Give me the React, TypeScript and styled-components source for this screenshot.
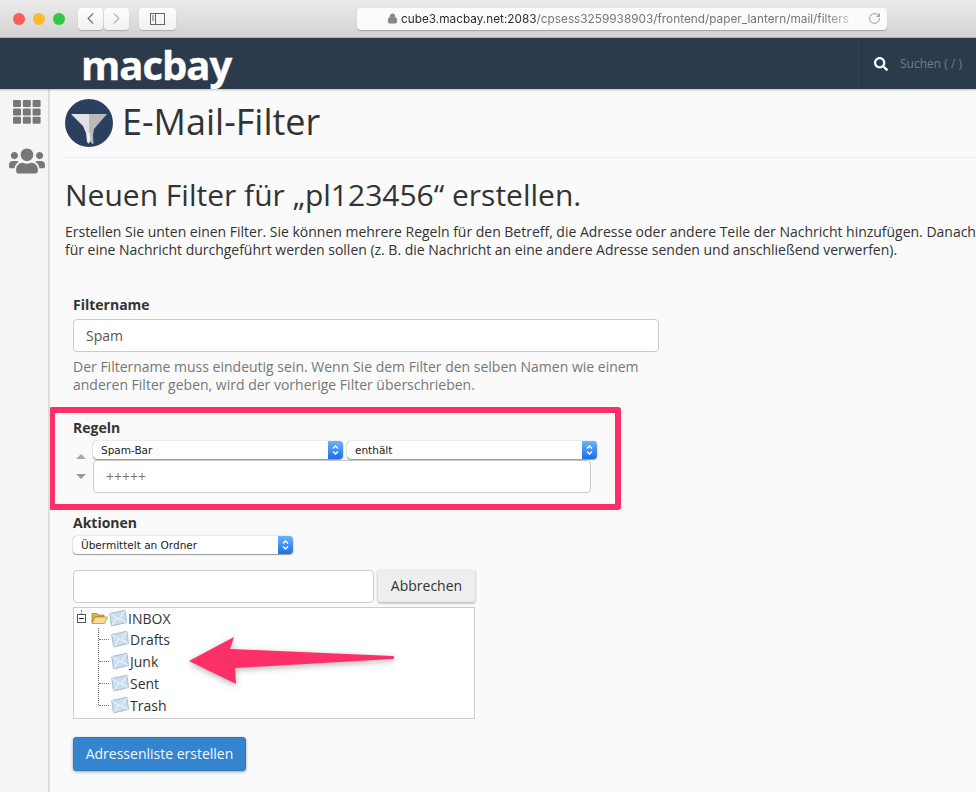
import React from "react";
import styled, { createGlobalStyle } from "styled-components";
import { ChevronLeft, ChevronRight, RotateCw, Lock } from "lucide-react";
import { FaSearch, FaUsers } from "react-icons/fa";

const Global = createGlobalStyle`
  html, body { margin: 0; padding: 0; background: #fafafa; overflow: hidden; }
  body { width: 976px; height: 792px; font-family: "Open Sans", sans-serif; color: #333; }
  * { box-sizing: border-box; }
`;

const Page = styled.div`
  width: 976px; height: 792px; overflow: hidden; position: relative;
  display: flex; flex-direction: column; background: #fafafa;
`;
const Toolbar = styled.div`
  height: 38px; flex: none; display: flex; align-items: center; padding: 0 0 0 13px;
  background: linear-gradient(#ebebeb, #d3d3d3); border-bottom: 1px solid #b5b5b5;
`;
const Lights = styled.div`display: flex; gap: 8px; margin-right: 13px;`;
const Light = styled.span<{ $c: string }>`
  width: 12px; height: 12px; border-radius: 50%; background: ${p => p.$c};
`;
const ToolButton = styled.div<{ $w: number; $mr: number }>`
  width: ${p => p.$w}px; height: 22px; margin-right: ${p => p.$mr}px; flex: none;
  display: flex; align-items: center; justify-content: center; color: #6f6f6f;
  background: linear-gradient(#fdfdfd, #f1f1f1); border-radius: 4px;
  box-shadow: 0 1px 1px rgba(0,0,0,.22);
`;
const UrlBar = styled.div`
  width: 530px; height: 22px; margin-left: 181px; flex: none; position: relative;
  display: flex; align-items: center; padding-left: 30px; color: #777;
  background: #fbfbfb; border-radius: 4px; box-shadow: 0 1px 1px rgba(0,0,0,.25);
  font: 11.8px "Inter", sans-serif; white-space: nowrap; overflow: hidden;
`;
const UrlText = styled.span`
  margin-left: 3px; width: 454px; overflow: hidden; flex: none;
  -webkit-mask-image: linear-gradient(90deg, #000 93%, rgba(0,0,0,.25));
  mask-image: linear-gradient(90deg, #000 93%, rgba(0,0,0,.25));
`;
const Host = styled.span`color: #2c2c2c;`;
const Reload = styled.span`margin-left: 13px; display: flex; color: #707070;`;

const Header = styled.header`
  height: 51px; flex: none; display: flex; align-items: center; background: #2b3b4c;
  box-shadow: 0 1px 2px rgba(0,0,0,.25); position: relative; z-index: 2;
`;
const Logo = styled.div`
  margin-left: 81px; font: 700 40px/51px "Open Sans", sans-serif; color: #fff; letter-spacing: -1px;
  transform: translateY(1px); -webkit-text-stroke: .4px #fff;
`;
const SearchBox = styled.div`
  margin-left: auto; width: 118px; height: 51px; display: flex; align-items: center;
  padding-left: 15px; border-left: 1px solid #324354; color: #fff; gap: 12px;
`;
const SearchHint = styled.span`font-size: 12px; color: #6f7e8c;`;

const Body = styled.div`flex: 1; display: flex; min-height: 0;`;
const Side = styled.aside`
  width: 50px; flex: none; background: #f5f5f5; border-right: 2px solid #dedede;
  display: flex; flex-direction: column; align-items: center; padding: 10px 0 0 6px;
  gap: 18px; color: #777;
`;
const Main = styled.main`flex: 1; min-width: 0; padding: 0 0 0 15px; overflow: hidden;`;
const TitleRow = styled.div`
  height: 69px; display: flex; align-items: center; gap: 9px;
  border-bottom: 1px solid #eaeaea;
`;
const PageTitle = styled.h1`
  margin: 0; font: 400 36px/48px "Open Sans", sans-serif; color: #333; transform: translateY(-1px);
`;
const Heading = styled.h2`
  margin: 17px 0 0; font: 400 30px/40px "Open Sans", sans-serif; color: #333; white-space: nowrap;
`;
const Intro = styled.p`
  margin: 8px 0 0; font-size: 14px; line-height: 18px; color: #333; white-space: nowrap;
  letter-spacing: -.015px;
`;
const Form = styled.form`margin: 36px 0 0 8px; width: 860px;`;
const Label = styled.div<{ $mt?: number; $mb?: number }>`
  font: 700 14px/20px "Open Sans", sans-serif; color: #333;
  margin: ${p => p.$mt ?? 0}px 0 ${p => p.$mb ?? 0}px;
`;
const TextInput = styled.div<{ $w: number; $muted?: boolean }>`
  width: ${p => p.$w}px; height: 33px; flex: none; background: #fff;
  border: 1px solid #ccc; border-radius: 4px; padding: 0 12px;
  font-size: 14px; line-height: 31px; color: ${p => (p.$muted ? "#777" : "#555")};
`;
const Help = styled.p`
  margin: 6px 0 0; width: 586px; font-size: 14px; line-height: 18px; color: #777;
`;
const RulesFrame = styled.section`
  margin: 13px 0 0 -24px; width: 572px; height: 103px;
  border: 6px solid #fd2f69; border-radius: 3px; padding: 5px 0 0 18px;
`;
const RuleBody = styled.div`display: flex; margin-top: 3px;`;
const Movers = styled.div`
  width: 20px; flex: none; display: flex; flex-direction: column; align-items: flex-start;
  padding: 13px 0 0 3px; gap: 15px;
`;
const Arrow = styled.span<{ $up?: boolean }>`
  width: 0; height: 0; border-left: 5px solid transparent; border-right: 5px solid transparent;
  ${p => (p.$up ? "border-bottom: 5px solid #aaa;" : "border-top: 5px solid #999;")}
`;
const RuleFields = styled.div`display: flex; flex-direction: column; gap: 1px; width: 504px;`;
const SelectRow = styled.div`display: flex; gap: 4px;`;
const Select = styled.div<{ $w: number }>`
  width: ${p => p.$w}px; height: 18px; flex: none; position: relative; background: #fff;
  border-radius: 4px; box-shadow: 0 0 1px rgba(0,0,0,.55), 0 1px 1px rgba(0,0,0,.35);
  font: 10.5px/18px "DejaVu Sans", sans-serif; color: #222; padding-left: 8px; overflow: hidden;
`;
const Stepper = styled.span`
  position: absolute; right: 0; top: 0; width: 15px; height: 18px;
  display: flex; align-items: center; justify-content: center;
  background: linear-gradient(#6db3fb, #1a6ee8);
`;
const FolderRow = styled.div`display: flex; gap: 4px; margin-top: 16px; align-items: flex-start;`;
const CancelButton = styled.div`
  width: 97px; height: 32px; background: #eee; border-radius: 2px; text-align: center;
  font-size: 14px; line-height: 32px; color: #333; box-shadow: 0 1px 3px rgba(0,0,0,.35);
`;
const Tree = styled.div`
  position: relative; width: 402px; height: 112px; margin-top: 4px; background: #fff;
  border: 1px solid #ccc; padding: 0 0 0 3px; font-size: 14px; color: #333;
`;
const Root = styled.div`display: flex; align-items: center; height: 20px;`;
const Toggle = styled.span`
  width: 9px; height: 9px; border: 1px solid #555; background: #fff; position: relative; flex: none;
  margin-right: 5px;
  &::before { content: ""; position: absolute; left: 3px; top: -5px; height: 4px; border-left: 1px dotted #777; }
  &::after { content: ""; position: absolute; left: 1px; right: 1px; top: 3px; height: 1px; background: #333; }
`;
const Children = styled.div`
  margin-left: 21px; border-left: 1px dotted #777; height: 77px;
  display: flex; flex-direction: column;
`;
const Child = styled.div`
  display: flex; align-items: center; height: 22px; flex: none; white-space: nowrap;
  &::before { content: ""; width: 10px; margin-right: 2px; border-top: 1px dotted #777; flex: none; }
`;
const Name = styled.span`margin-left: 1px;`;
const Submit = styled.div`
  margin-top: 18px; width: 173px; height: 34px; background: #3584d0; border: 1px solid #2f78be;
  border-radius: 3px; color: #f4faff; text-align: center; font-size: 14px; line-height: 32px;
  box-shadow: 0 1px 3px rgba(0,0,0,.35);
`;
const PointerArrow = styled.svg`
  position: absolute; left: 180px; top: 630px; overflow: visible; z-index: 3;
`;
const ArrowShape = styled.path`
  fill: #fd2f69; filter: drop-shadow(0 2px 3px rgba(0,0,0,.3));
`;

const Steps = () => (
  <svg width="9" height="12" viewBox="0 0 9 12" fill="none" stroke="#fff" strokeWidth="1.3">
    <path d="M2 4.500 4.500 2 7 4.500M2 7.500 4.500 10 7 7.500" />
  </svg>
);
const Envelope = () => (
  <svg width="18" height="18" viewBox="0 0 18 18" style={{ flex: "none" }}>
    <path d="M.7 4.500 16 1.200 17.500 13.500 2.500 17z" fill="#c9deee" stroke="#96b2c9" strokeWidth=".8" />
    <path d="M1 4.700 9.800 10.500 16 1.500M2.700 16.600 8 8.800M17.300 13.300 10.500 9.600" fill="none" stroke="#f4f9fc" strokeWidth="1" />
  </svg>
);
const Folder = () => (
  <svg width="17" height="14" viewBox="0 0 17 14" style={{ flex: "none", marginRight: 1 }}>
    <path d="M1 12V2.500h5l1.500 1.500H13v2H4z" fill="#e0b44c" stroke="#9c7a2a" strokeWidth=".7" />
    <path d="M1 12.500 4 6h12.500l-3 6.500z" fill="#f6dc8b" stroke="#a8852f" strokeWidth=".7" />
  </svg>
);
const GridIcon = () => (
  <svg width="30" height="26" viewBox="0 0 30 26" fill="#777">
    {[0, 1, 2].flatMap(r => [0, 1, 2].map(c => (
      <rect key={`${r}${c}`} x={1 + c * 9.8} y={1 + r * 8.4} width="8" height="7" rx="1.2" />
    )))}
  </svg>
);
const FunnelIcon = () => (
  <svg width="48" height="48" viewBox="0 0 48 48" style={{ flex: "none" }}>
    <circle cx="24" cy="24" r="24" fill="#2b3f5f" />
    <path d="M6 15h18v30l-2-2-1-9-3-7z" fill="#e2e2e2" />
    <path d="M24 15h18L29 30l-1 6 .5 9-2.500-1-2-6z" fill="#b9b9b9" />
    <path d="M22 34h3l.5 8-1.500 2-1.500-3z" fill="#f0f0f0" />
  </svg>
);

const folders = ["Drafts", "Junk", "Sent", "Trash"];

export default function App() {
  return (
    <Page>
      <Global />
      <Toolbar>
        <Lights>
          <Light $c="#fc5b57" /><Light $c="#fdb92e" /><Light $c="#33c748" />
        </Lights>
        <ToolButton $w={25} $mr={1}><ChevronLeft size={19} strokeWidth={1.4} /></ToolButton>
        <ToolButton $w={25} $mr={10}><ChevronRight size={19} strokeWidth={1.4} color="#b4b4b4" /></ToolButton>
        <ToolButton $w={37} $mr={0}>
          <svg width="15" height="12" viewBox="0 0 15 12" fill="none" stroke="#666">
            <rect x=".5" y=".5" width="14" height="11" /><path d="M5.500 .5v11M2 3h2M2 5h2M2 7h2" />
          </svg>
        </ToolButton>
        <UrlBar>
          <Lock size={11} fill="#888" stroke="#888" />
          <UrlText><Host>cube3.macbay.net:2083</Host>/cpsess3259938903/frontend/paper_lantern/mail/filters</UrlText>
          <Reload><RotateCw size={13} strokeWidth={1.3} /></Reload>
        </UrlBar>
      </Toolbar>
      <Header>
        <Logo>macbay</Logo>
        <SearchBox>
          <FaSearch size={14} />
          <SearchHint>Suchen ( / )</SearchHint>
        </SearchBox>
      </Header>
      <Body>
        <Side><GridIcon /><FaUsers size={36} color="#777" /></Side>
        <Main>
          <TitleRow><FunnelIcon /><PageTitle>E-Mail-Filter</PageTitle></TitleRow>
          <Heading>Neuen Filter für „pl123456“ erstellen.</Heading>
          <Intro>
            Erstellen Sie unten einen Filter. Sie können mehrere Regeln für den Betreff, die Adresse oder andere Teile der Nachricht hinzufügen. Danach<br />
            für eine Nachricht durchgeführt werden sollen (z. B. die Nachricht an eine andere Adresse senden und anschließend verwerfen).
          </Intro>
          <Form>
            <Label $mb={4}>Filtername</Label>
            <TextInput $w={586}>Spam</TextInput>
            <Help>Der Filtername muss eindeutig sein. Wenn Sie dem Filter den selben Namen wie einem anderen Filter geben, wird der vorherige Filter überschrieben.</Help>
            <RulesFrame>
              <Label>Regeln</Label>
              <RuleBody>
                <Movers><Arrow $up /><Arrow /></Movers>
                <RuleFields>
                  <SelectRow>
                    <Select $w={250}>Spam-Bar<Stepper><Steps /></Stepper></Select>
                    <Select $w={250}>enthält<Stepper><Steps /></Stepper></Select>
                  </SelectRow>
                  <TextInput $w={498} $muted>+++++</TextInput>
                </RuleFields>
              </RuleBody>
            </RulesFrame>
            <Label $mt={3} $mb={3}>Aktionen</Label>
            <Select $w={220}>Übermittelt an Ordner<Stepper><Steps /></Stepper></Select>
            <FolderRow>
              <TextInput $w={301} />
              <CancelButton>Abbrechen</CancelButton>
            </FolderRow>
            <Tree>
              <Root><Toggle /><Folder /><Envelope /><Name>INBOX</Name></Root>
              <Children>
                {folders.map(f => <Child key={f}><Envelope /><Name>{f}</Name></Child>)}
              </Children>
            </Tree>
            <Submit>Adressenliste erstellen</Submit>
          </Form>
        </Main>
      </Body>
      <PointerArrow width="220" height="60" viewBox="0 0 220 60">
        <ArrowShape d="M9 31 54 7l-4 12 163 7c2 1 1 3 0 3L55 38l1 16z" />
      </PointerArrow>
    </Page>
  );
}
